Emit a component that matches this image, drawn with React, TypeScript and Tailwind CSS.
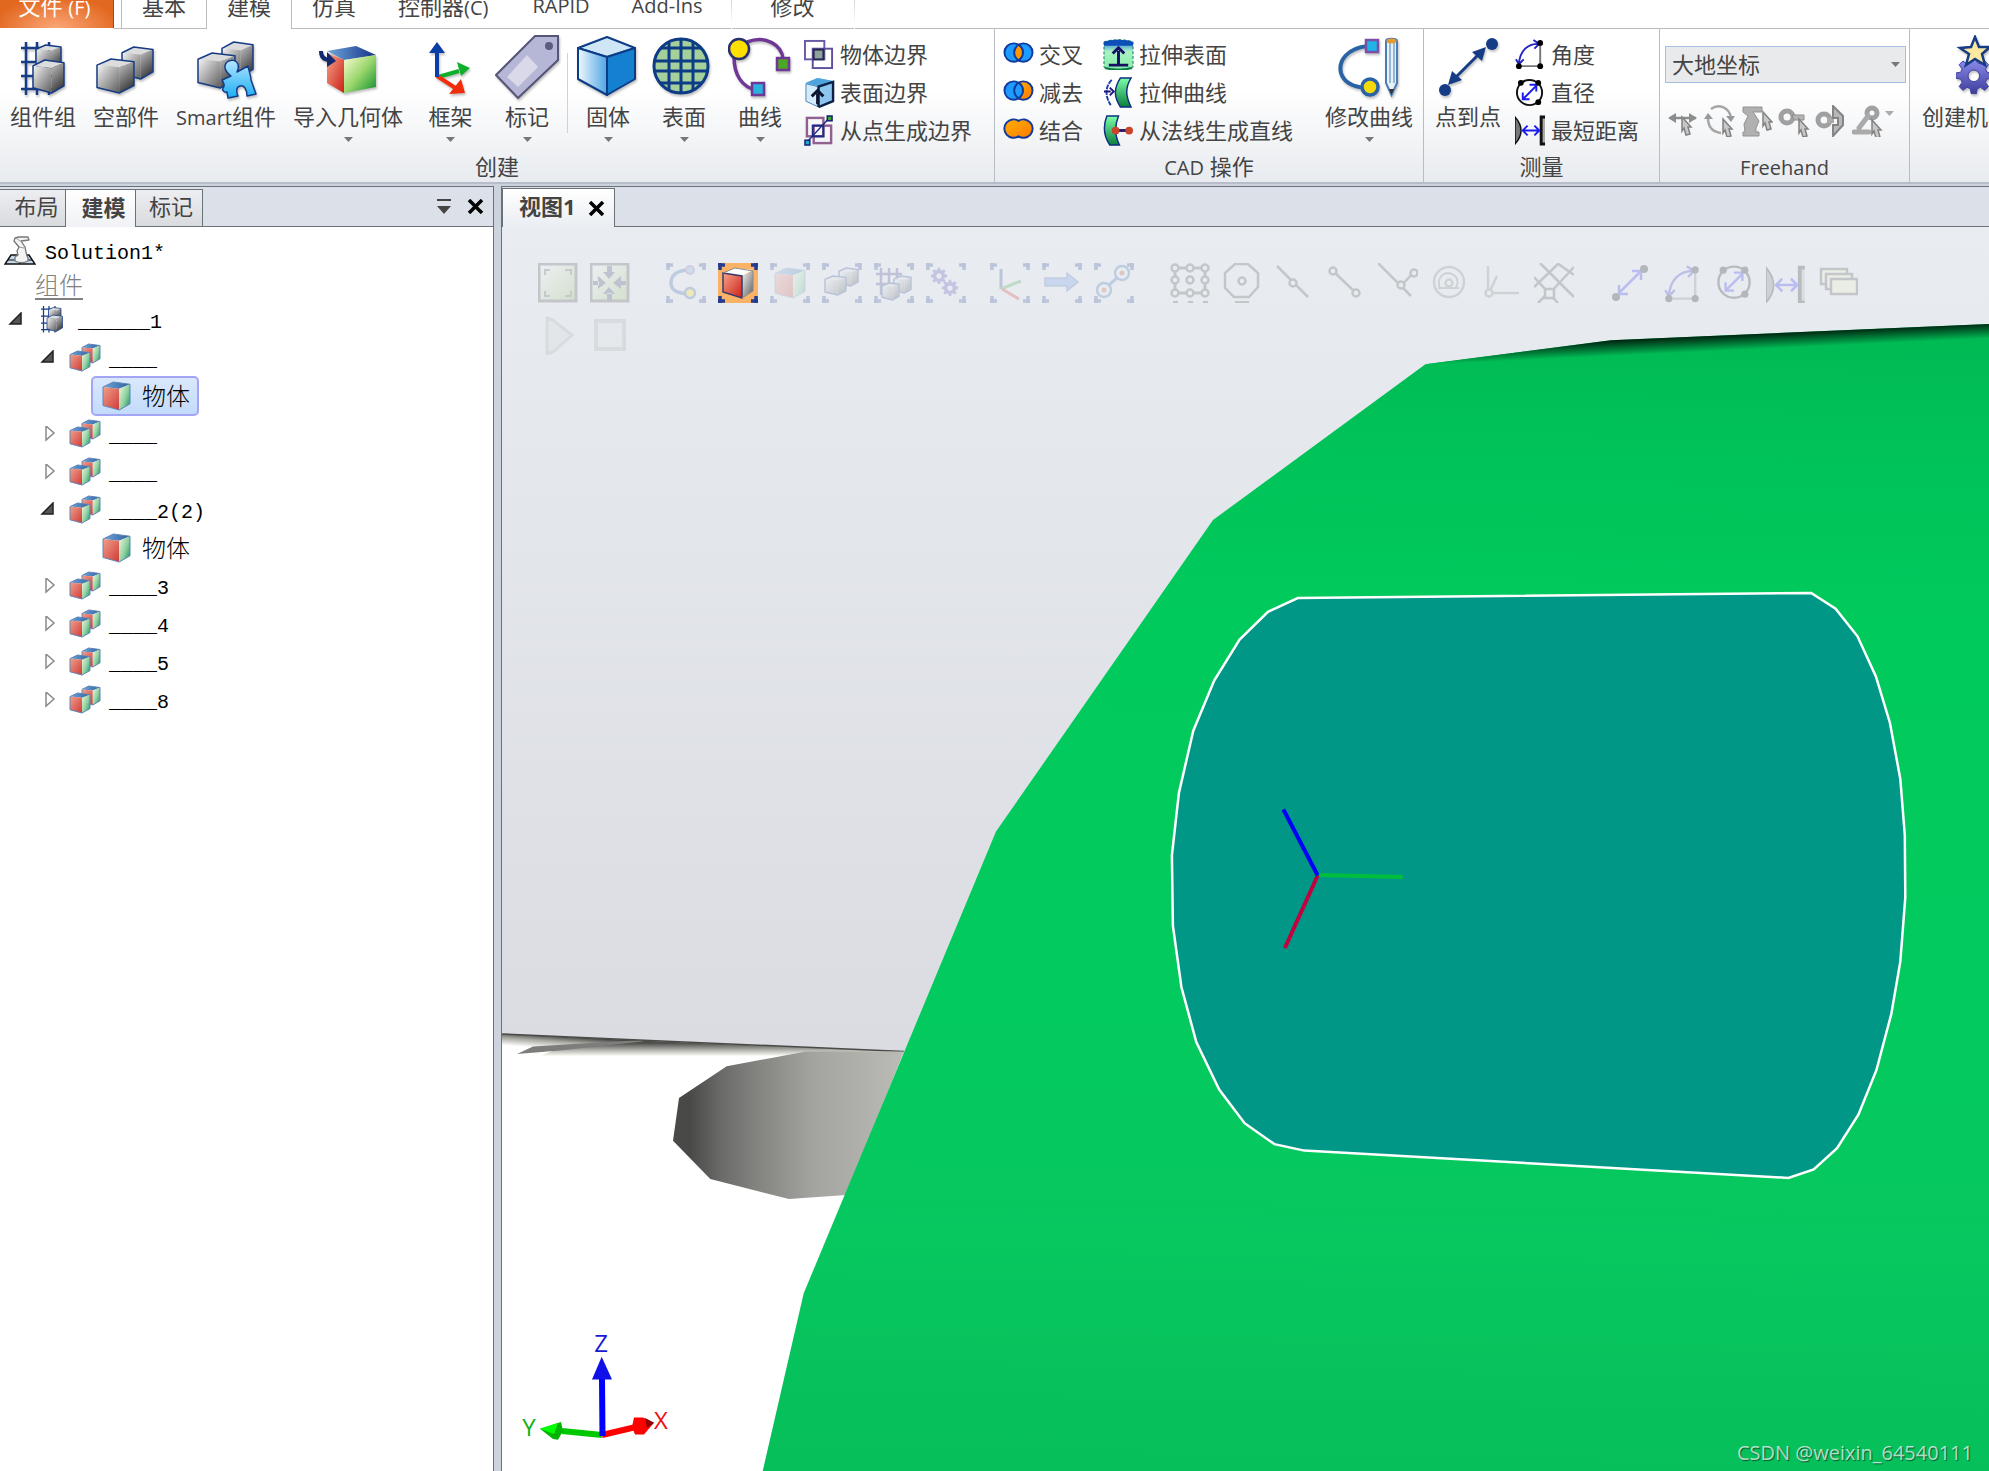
import type { ReactNode } from "react";

const NAVY = "#163c85";

// Shared gradients, referenced by every icon on the page
const IconDefs = () => (
  <svg className="absolute h-0 w-0" aria-hidden="true">
    <defs>
      <linearGradient id="greyFront" x1="0" y1="0" x2="1" y2="1">
        <stop offset="0" stopColor="#f4f4f4" />
        <stop offset="0.5" stopColor="#a9a9a9" />
        <stop offset="1" stopColor="#5d5d5d" />
      </linearGradient>
      <linearGradient id="greySide" x1="0" y1="0" x2="0.4" y2="1">
        <stop offset="0" stopColor="#c4c4c4" />
        <stop offset="1" stopColor="#3d3d3d" />
      </linearGradient>
      <linearGradient id="redFace" x1="0" y1="0" x2="1" y2="1">
        <stop offset="0" stopColor="#f5a48a" />
        <stop offset="1" stopColor="#cc1f16" />
      </linearGradient>
      <linearGradient id="softRed" x1="0" y1="0" x2="1" y2="1">
        <stop offset="0" stopColor="#f0a08a" />
        <stop offset="1" stopColor="#cf3a38" />
      </linearGradient>
      <linearGradient id="greenFace" x1="0" y1="0" x2="1" y2="1">
        <stop offset="0" stopColor="#fbfdd8" />
        <stop offset="0.5" stopColor="#9bd76c" />
        <stop offset="1" stopColor="#0c8d2c" />
      </linearGradient>
      <linearGradient id="softGreen" x1="0" y1="0" x2="1" y2="0.8">
        <stop offset="0" stopColor="#eef7dc" />
        <stop offset="0.6" stopColor="#8ed0a0" />
        <stop offset="1" stopColor="#2a9a68" />
      </linearGradient>
      <linearGradient id="blueTop" x1="0" y1="0" x2="1" y2="0">
        <stop offset="0" stopColor="#6fa8d8" />
        <stop offset="1" stopColor="#14308a" />
      </linearGradient>
      <linearGradient id="softBlue" x1="0" y1="0" x2="1" y2="0">
        <stop offset="0" stopColor="#6fa6dc" />
        <stop offset="1" stopColor="#2f5f9f" />
      </linearGradient>
      <linearGradient id="solidFront" x1="0" y1="0" x2="1" y2="0">
        <stop offset="0" stopColor="#f1f8fd" />
        <stop offset="1" stopColor="#4fa6e4" />
      </linearGradient>
      <linearGradient id="puzzle" x1="0" y1="0" x2="0" y2="1">
        <stop offset="0" stopColor="#b5e6ff" />
        <stop offset="1" stopColor="#1aaef5" />
      </linearGradient>
      <linearGradient id="cyan" x1="0" y1="0" x2="0" y2="1">
        <stop offset="0" stopColor="#1a6fe0" />
        <stop offset="0.4" stopColor="#a9f2c4" />
        <stop offset="1" stopColor="#86efa4" />
      </linearGradient>
      <linearGradient id="band" x1="0" y1="0" x2="0" y2="1">
        <stop offset="0" stopColor="#7dffa8" />
        <stop offset="1" stopColor="#0b7d3c" />
      </linearGradient>
      <linearGradient id="gear" x1="0" y1="0" x2="0" y2="1">
        <stop offset="0" stopColor="#8f8ff0" />
        <stop offset="1" stopColor="#3d3d9c" />
      </linearGradient>
      <linearGradient id="orange" x1="0" y1="0" x2="1" y2="1">
        <stop offset="0" stopColor="#ffb000" />
        <stop offset="1" stopColor="#ff7a00" />
      </linearGradient>
      <linearGradient id="paleGreen" x1="0" y1="0" x2="1" y2="1">
        <stop offset="0" stopColor="#ffffff" />
        <stop offset="1" stopColor="#8fb94f" />
      </linearGradient>
    </defs>
  </svg>
);

type CubeProps = { x: number; y: number; w: number; h: number; color?: boolean };

// Box seen from slightly above, either grey with a navy outline or coloured
const Cube = ({ x, y, w, h, color = false }: CubeProps) => {
  const pts = (list: number[][]) => list.map(([px, py]) => `${x + px * w},${y + py * h}`).join(" ");
  return (
    <g strokeLinejoin="round">
      <polygon points={pts([[0, 0.18], [0.38, 0], [1, 0.08], [0.6, 0.24]])} fill={color ? "url(#softBlue)" : "#dcdcdc"} />
      <polygon points={pts([[0, 0.18], [0.6, 0.24], [0.6, 1], [0, 0.84]])} fill={color ? "url(#softRed)" : "url(#greyFront)"} />
      <polygon points={pts([[0.6, 0.24], [1, 0.08], [1, 0.78], [0.6, 1]])} fill={color ? "url(#softGreen)" : "url(#greySide)"} />
      <polygon
        points={pts([[0, 0.18], [0.38, 0], [1, 0.08], [1, 0.78], [0.6, 1], [0, 0.84]])}
        fill="none"
        stroke={color ? "#5f86b8" : NAVY}
        strokeWidth={color ? 1 : 1.5}
      />
    </g>
  );
};

const GEAR =
  "M10.4 1h3.2l.5 3 2 .8 2.5-1.8 2.3 2.3-1.8 2.5.8 2 3 .5v3.2l-3 .5-.8 2 1.8 2.5-2.3 2.3-2.5-1.8-2 .8-.5 3h-3.2l-.5-3-2-.8-2.5 1.8-2.3-2.3 1.8-2.5-.8-2-3-.5v-3.2l3-.5.8-2-1.8-2.5 2.3-2.3 2.5 1.8 2-.8zM12 8.5a3.5 3.5 0 1 0 0 7 3.5 3.5 0 0 0 0-7z";

const Icon = ({ size, className, children }: { size: number; className: string; children: ReactNode }) => (
  <svg viewBox={`0 0 ${size} ${size}`} className={`shrink-0 ${className}`} aria-hidden="true">
    {children}
  </svg>
);

// Ribbon drawings on a 64 unit grid
const GridCubes = () => (
  <>
    <path d="M15 7v53M26 7v53M38 7v53M10 13h32M10 27h32M10 41h32M10 54h32" stroke={NAVY} strokeWidth="2.5" />
    <Cube x={25} y={10} w={25} h={24} />
    <Cube x={22} y={25} w={31} h={33} />
  </>
);

const TwoCubes = () => (
  <>
    <Cube x={28} y={12} w={31} h={32} />
    <Cube x={3} y={24} w={37} h={34} />
  </>
);

const SmartCubes = () => (
  <>
    <Cube x={28} y={7} w={31} h={35} />
    <Cube x={4} y={18} w={37} h={35} />
    <path
      d="M28 45l9-4c-6-4-8-10-4-14 4-3 9-2 11 2 1 3 0 6-1 8l11-6c1 6 3 9 3 14l5 14-9 2c0-7-3-11-7-10-4 1-4 6-2 10l-10 2-1-6c-3 1-5-2-4-4 2-2 1-5-1-8z"
      fill="url(#puzzle)"
      stroke={NAVY}
      strokeWidth="1.5"
      strokeLinejoin="round"
    />
  </>
);

const ImportCube = () => (
  <>
    <polygon points="11,16 40,11 60,20 28,25" fill="url(#blueTop)" />
    <polygon points="11,18 28,25 28,58 11,48" fill="url(#redFace)" />
    <polygon points="28,25 60,20 60,52 28,58" fill="url(#greenFace)" />
    <path d="M5 16c0 6 3 9 9 9" fill="none" stroke="#12296e" strokeWidth="4" />
    <polygon points="11,17 20,26 11,32" fill="#12296e" />
  </>
);

const Frame = () => (
  <>
    <path d="M19 42L40 36" stroke="#0fae2b" strokeWidth="4" />
    <polygon points="51,33 38,27 42,41" fill="#0fae2b" />
    <path d="M18 41l20 13" stroke="#f22d0c" strokeWidth="4" />
    <polygon points="46,58 30,59 42,44" fill="#f22d0c" />
    <path d="M18 42V16" stroke="#0b3fa8" strokeWidth="4" />
    <polygon points="18,7 10,18 26,18" fill="#0b3fa8" />
  </>
);

const Tag = () => (
  <>
    <polygon points="40,1 63,1 63,25 23,63 1,40" fill="#b6b6d6" stroke="#55557a" strokeWidth="2" />
    <polygon points="32,20 43,32 23,52 12,42" fill="#d9d9ea" />
    <circle cx="54" cy="11" r="4" fill="#5c5c80" />
  </>
);

const Solid = () => (
  <g stroke="#0d3c86" strokeWidth="2" strokeLinejoin="round">
    <polygon points="31,2 59,13 31,22 2,13" fill="#cfe6f7" />
    <polygon points="2,13 31,22 31,60 2,44" fill="url(#solidFront)" />
    <polygon points="31,22 59,13 59,44 31,60" fill="#1580cf" />
  </g>
);

const Surface = () => (
  <>
    <circle cx="29" cy="31" r="27" fill="#a5cf9b" stroke="#0d3c86" strokeWidth="3" />
    <path d="M17 7v48M29 4v54M41 7v48M9 13h40M3 26h52M3 36h52M8 48h42" stroke="#0d3c86" strokeWidth="3" />
  </>
);

const Curve = () => (
  <>
    <path d="M19 7C38 0 54 10 55 24M6 22c0 18 8 30 22 33" fill="none" stroke="#6f3796" strokeWidth="3.5" />
    <circle cx="11" cy="14" r="10" fill="#ffe000" stroke="#26306e" strokeWidth="2.5" />
    <rect x="49" y="23" width="12" height="12" fill="#4ea723" stroke="#6f3796" strokeWidth="2.5" />
    <rect x="24" y="48" width="12" height="12" fill="#2bb3df" stroke="#6f3796" strokeWidth="2.5" />
  </>
);

const EditCurve = () => (
  <>
    <path d="M31 11C10 13 1 26 4 38c3 10 13 14 25 15" fill="none" stroke="#2a63a5" strokeWidth="4" />
    <rect x="29" y="5" width="12" height="12" fill="#1fb3e6" stroke="#7a4fa5" strokeWidth="2.5" />
    <circle cx="33" cy="52" r="8" fill="#f5d90a" stroke="#2a63a5" strokeWidth="3.5" />
    <path d="M49 6c0-3 11-3 11 0v42l-5.5 12-5.5-12z" fill="#e9f1f8" stroke="#4a7fb5" strokeWidth="2" />
    <path d="M53 8v40M57 8v40" stroke="#7ba3cc" strokeWidth="1.5" />
    <ellipse cx="54.5" cy="6" rx="5" ry="2.5" fill="#e79b2c" />
    <polygon points="52,54 57,54 54.5,60" fill="#333" />
  </>
);

const PointToPoint = () => (
  <>
    <path d="M18 44L44 18" stroke={NAVY} strokeWidth="3" />
    <polygon points="50,12 46,26 36,17" fill={NAVY} />
    <polygon points="12,50 16,36 26,45" fill={NAVY} />
    <circle cx="56" cy="9" r="6" fill={NAVY} />
    <circle cx="9" cy="55" r="6" fill={NAVY} />
  </>
);

const Mechanism = () => (
  <>
    <g transform="translate(-2 21) scale(1.65)">
      <path d={GEAR} fill="url(#gear)" fillRule="evenodd" stroke="#3f3f9e" strokeWidth="0.6" />
    </g>
    <polygon
      points="19,2 23,12 34,12 26,19 29,30 19,24 10,30 13,19 4,13 15,12"
      fill="#fbe9a0"
      stroke={NAVY}
      strokeWidth="2.5"
    />
  </>
);

// Small ribbon drawings on a 32 unit grid
const BodyBorder = () => (
  <>
    <rect x="1" y="2" width="20" height="19" fill="none" stroke="#6a5aa6" strokeWidth="2" />
    <rect x="9" y="10" width="20" height="20" fill="none" stroke="#5f4f9c" strokeWidth="2" />
    <rect x="10" y="11" width="10" height="10" fill="#8fa39d" stroke="#252850" strokeWidth="2" />
  </>
);

const SurfaceBorder = () => (
  <>
    <path d="M2 6L14 1l16 3v21l-14 6L2 25z" fill="#8cc6ef" />
    <path d="M2 7l13 3v21L2 25z" fill="#d3ebfb" stroke="#4a86c0" />
    <path d="M2 6L14 1l16 3-14 6z" fill="#4fa4dd" />
    <path d="M15 31V10l15-5v20l-15 6" fill="none" stroke="#0d2147" strokeWidth="2.5" />
    <path d="M14 28V17M8 20l6-6 6 6" fill="none" stroke="#0d1430" strokeWidth="3" />
  </>
);

const PointsBorder = () => (
  <>
    <rect x="3" y="3" width="17" height="19" fill="none" stroke="#90608e" strokeWidth="2.5" />
    <rect x="10" y="11" width="18" height="18" fill="none" stroke="#90608e" strokeWidth="2.5" />
    <rect x="9" y="11" width="11" height="11" fill="none" stroke="#1b2b8a" strokeWidth="2" />
    <path d="M3 28L26 3" stroke="#1b2b8a" strokeWidth="1.5" />
    <rect x="1" y="26" width="5" height="5" fill="#22aacc" stroke="#131e77" strokeWidth="1.5" />
    <rect x="24" y="1" width="5" height="5" fill="#3aa832" stroke="#131e77" strokeWidth="1.5" />
  </>
);

const VENN_OUTLINE = "M16 6a9.500 9.500 0 1 0 0 16a9.500 9.500 0 1 0 0-16z";

const Venn = ({ kind }: { kind: "intersect" | "subtract" | "union" }) => (
  <g stroke="#123a9c" strokeWidth="2">
    {kind === "union" ? (
      <path d={VENN_OUTLINE} fill="url(#orange)" />
    ) : (
      <>
        <circle cx="21" cy="14" r="9.5" fill={kind === "intersect" ? "#1d9bff" : "url(#orange)"} />
        <circle cx="11" cy="14" r="9.5" fill="#1d9bff" />
        <path d="M16 6c6 4 6 12 0 16-6-4-6-12 0-16z" fill={kind === "intersect" ? "#ff9800" : "#1d9bff"} />
      </>
    )}
  </g>
);

const ExtrudeSurface = () => (
  <>
    <path d="M1 3c8-3 22-3 30 0v26c-8 3-22 3-30 0z" fill="url(#cyan)" stroke="#1c6f6a" strokeDasharray="3 2" />
    <path d="M1 3c8-3 22-3 30 0v4H1z" fill="#0c4fb8" />
    <path d="M16 27V12M10 15l6-6 6 6M6 27h20" fill="none" stroke="#150f66" strokeWidth="3" />
    <path d="M2 30c8 2 20 2 28 0" stroke="#0a7c48" strokeWidth="2" fill="none" />
  </>
);

const ExtrudeCurve = () => (
  <>
    <path d="M18 1h11c-6 10-6 18 0 30H18c-7-11-7-19 0-30z" fill="url(#band)" stroke="#0c2f80" strokeWidth="1.5" />
    <path d="M9 3C2 10 2 20 8 29" fill="none" stroke="#1c3fae" strokeWidth="2" strokeDasharray="5 1" />
    <path d="M1 15h7M7 11l4 4-4 4" fill="none" stroke="#221680" strokeWidth="2" />
  </>
);

const NormalLine = () => (
  <>
    <path d="M4 1h12c-4 10-4 20 1 30H7C1 22 0 11 4 1z" fill="url(#band)" stroke="#0c2f80" strokeWidth="1.5" />
    <path d="M12 16h14" stroke="#2a1a66" strokeWidth="3" />
    <circle cx="13" cy="16" r="4" fill="#c8452c" />
    <circle cx="27" cy="16" r="4" fill="#c8452c" />
  </>
);

const Angle = () => (
  <>
    <path d="M4 28h22V4" fill="none" stroke="#777" strokeWidth="2" />
    <path d="M4 26C5 12 13 5 24 5M1 21l3 5 5-5M19 1l6 4-5 5" fill="none" stroke="#2323c4" strokeWidth="2" />
    <circle cx="4" cy="28" r="3" />
    <circle cx="26" cy="28" r="3" />
    <circle cx="26" cy="4" r="3" />
  </>
);

const Diameter = () => (
  <>
    <circle cx="15" cy="16" r="13" fill="none" stroke="#111" strokeWidth="2" />
    <path d="M8 23L22 9M15 8h7v7M8 16v7h7" fill="none" stroke="#1b1bf0" strokeWidth="2" />
    <circle cx="6" cy="6" r="3" />
    <circle cx="24" cy="6" r="3" />
    <circle cx="24" cy="26" r="3" />
  </>
);

const Distance = () => (
  <>
    <path d="M0 2c8 9 8 19 0 28z" fill="#777" stroke="#111" strokeWidth="1.5" />
    <path d="M31 2h-4v28h4" fill="#aaa" stroke="#111" strokeWidth="3" />
    <path d="M9 16h15M13 11l-5 5 5 5M20 11l5 5-5 5" fill="none" stroke="#1b1bf0" strokeWidth="2" />
  </>
);

const Pointer = ({ x = 18, y = 12 }: { x?: number; y?: number }) => (
  <path d={`M${x} ${y}l9 10h-3l2 7-4 1-2-7-2 3z`} fill="#c8c8c8" stroke="#828282" strokeWidth="1.5" />
);

const freehandIcons: { name: string; art: ReactNode }[] = [
  {
    name: "移动",
    art: (
      <>
        <path d="M3 13h26" stroke="#8c8c8c" strokeWidth="2.5" />
        <path d="M1 13l8-5v10zM30 13l-8-5v10z" fill="#8c8c8c" />
        <Pointer x={15} />
      </>
    ),
  },
  {
    name: "旋转",
    art: (
      <>
        <path d="M7 4c7-5 18-3 20 9M4 13c0 9 5 14 13 15" fill="none" stroke="#a5a5a5" strokeWidth="2.5" />
        <path d="M22 11h9l-4 6zM0 14h9l-5-6z" fill="#999" />
        <Pointer x={19} y={14} />
      </>
    ),
  },
  {
    name: "手动关节",
    art: (
      <>
        <path d="M2 2h19v5h-9l6 9-3 7v4h3v4H2v-4h2l-1-8 4-8-5-4z" fill="#b0b0b0" stroke="#939393" />
        <Pointer x={22} y={7} />
      </>
    ),
  },
  {
    name: "手动线性",
    art: (
      <>
        <circle cx="9" cy="12" r="6" fill="none" stroke="#a0a0a0" strokeWidth="5" />
        <path d="M14 10h12v5H16z" fill="#b5b5b5" stroke="#8d8d8d" />
        <Pointer x={21} y={14} />
      </>
    ),
  },
  {
    name: "手动重定位",
    art: (
      <>
        <circle cx="9" cy="15" r="6" fill="none" stroke="#a0a0a0" strokeWidth="5" />
        <path d="M12 13h7v5h-7z" fill="#aaa" />
        <path d="M18 1l10 10v9L18 31V20h5v-7h-5z" fill="#b8b8b8" stroke="#858585" strokeWidth="2" />
      </>
    ),
  },
  {
    name: "多个机器人手动操作",
    art: (
      <>
        <circle cx="20" cy="8" r="5" fill="none" stroke="#a0a0a0" strokeWidth="5" />
        <path d="M16 11L7 23M2 27h15" stroke="#aaa" strokeWidth="5" strokeLinecap="round" />
        <Pointer x={20} y={15} />
      </>
    ),
  },
];

// Corner brackets around the selection-level tools
const Corners = () => (
  <path
    d="M0 2h7M2 0v7M33 2h7M38 0v7M0 38h7M2 40v-7M33 38h7M38 40v-7"
    stroke="#243c8f"
    strokeWidth="3.5"
    fill="none"
  />
);

const node = (cx: number, cy: number) => (
  <circle key={`${cx}-${cy}`} cx={cx} cy={cy} r="3.5" fill="#eee" stroke="#444" strokeWidth="2.5" />
);

type Tool = { name: string; art: ReactNode; active?: boolean; faint?: boolean };

const viewTools: Tool[][] = [
  [
    {
      name: "查看全部",
      art: (
        <>
          <rect x="1" y="1" width="37" height="37" fill="url(#paleGreen)" stroke="#444" strokeWidth="3" />
          <path d="M7 12V7h5M27 7h6v5M7 28v5h5M27 33h6v-5" fill="none" stroke="#555" strokeWidth="2" />
        </>
      ),
    },
    {
      name: "查看中心",
      art: (
        <>
          <rect x="1" y="1" width="37" height="37" fill="url(#paleGreen)" stroke="#444" strokeWidth="3" />
          <path d="M13 9h12l-6 7zM17 3h5v7h-5zM13 31h12l-6-7zM17 30h5v7h-5zM8 13v13l8-6zM3 18h6v4H3zM31 13v13l-8-6zM30 18h6v4h-6z" fill="#27365f" />
        </>
      ),
    },
  ],
  [
    {
      name: "选择曲线",
      art: (
        <>
          <Corners />
          <path d="M24 7C10 7 5 13 5 20s5 10 17 11" fill="none" stroke="#2b58a8" strokeWidth="3.5" />
          <circle cx="24" cy="7" r="4" fill="#7aa7dd" stroke="#8a58aa" strokeWidth="2" />
          <circle cx="24" cy="30" r="5" fill="#ffe000" stroke="#2b58a8" strokeWidth="2.5" />
        </>
      ),
    },
    {
      name: "选择表面",
      active: true,
      art: (
        <>
          <Corners />
          <polygon points="5,10 17,5 35,7 24,13" fill="#fff" />
          <polygon points="24,13 35,8 35,28 24,35" fill="url(#greyFront)" />
          <polygon points="5,10 24,13 24,35 5,29" fill="url(#redFace)" stroke="#3a3a6e" strokeWidth="1.5" />
          <path d="M5 10l12-5 18 3v20l-11 7" fill="none" stroke="#8a8a8a" />
        </>
      ),
    },
    {
      name: "选择物体",
      art: (
        <>
          <Corners />
          <Cube x={5} y={5} w={30} h={30} color />
        </>
      ),
    },
    {
      name: "选择部件",
      art: (
        <>
          <Corners />
          <Cube x={17} y={5} w={19} h={18} />
          <Cube x={3} y={13} w={21} h={19} />
        </>
      ),
    },
    {
      name: "选择组",
      art: (
        <>
          <Corners />
          <path d="M7 5v27M15 5v20M23 5v20M2 11h26M2 21h18" stroke="#3b2f8f" strokeWidth="2.5" />
          <Cube x={20} y={13} w={17} h={17} />
          <Cube x={8} y={20} w={17} h={17} />
        </>
      ),
    },
    {
      name: "选择机械装置",
      art: (
        <>
          <Corners />
          <g fill="#433db0" fillRule="evenodd">
            <path d={GEAR} transform="translate(4 4) scale(0.75)" />
            <path d={GEAR} transform="translate(15 16) scale(0.75)" />
          </g>
        </>
      ),
    },
  ],
  [
    {
      name: "选择目标点",
      art: (
        <>
          <Corners />
          <path d="M11 6v20" stroke="#24408f" strokeWidth="3" />
          <path d="M11 26l20-8" stroke="#2ba33c" strokeWidth="3" />
          <path d="M12 26l17 10" stroke="#d3281b" strokeWidth="3" />
        </>
      ),
    },
    {
      name: "选择移动指令",
      art: (
        <>
          <Corners />
          <path d="M3 15h22v-5l11 9-11 9v-5H3z" fill="#5c92e8" stroke="#3a5fa6" strokeWidth="1.5" />
        </>
      ),
    },
    {
      name: "选择路径",
      art: (
        <>
          <Corners />
          <circle cx="28" cy="10" r="7" fill="none" stroke="#2f62ab" strokeWidth="2.5" />
          <circle cx="10" cy="27" r="7" fill="none" stroke="#2f62ab" strokeWidth="2.5" />
          <path d="M15 22l8-7" stroke="#2f62ab" strokeWidth="3" />
          <circle cx="28" cy="10" r="2.5" fill="#c8452c" />
          <circle cx="10" cy="27" r="2.5" fill="#c8452c" />
        </>
      ),
    },
  ],
  [
    {
      name: "捕捉对象",
      art: (
        <>
          <rect x="5" y="5" width="30" height="25" fill="none" stroke="#444" strokeWidth="3" />
          {[5, 20, 35].flatMap((cx) => [5, 17, 30].map((cy) => node(cx, cy)))}
          <path d="M3 39h5M18 39h5M33 39h5" stroke="#444" strokeWidth="2" />
        </>
      ),
    },
    {
      name: "捕捉中心",
      art: (
        <>
          <polygon points="13,1 26,1 36,10 36,24 27,34 12,34 3,25 3,10" fill="none" stroke="#444" strokeWidth="2.5" />
          {node(20, 18)}
          <path d="M13 39h14" stroke="#444" strokeWidth="2" />
        </>
      ),
    },
    { name: "捕捉中点", art: <><path d="M3 3l31 31" stroke="#444" strokeWidth="2.5" />{node(19, 20)}</> },
    { name: "捕捉末端", art: <><path d="M7 8l24 23" stroke="#444" strokeWidth="2.5" />{node(7, 8)}{node(30, 30)}</> },
    {
      name: "捕捉边缘",
      art: (
        <>
          <path d="M0 0l33 33M23 23L36 9" stroke="#444" strokeWidth="2.5" />
          {node(23, 22)}
          {node(36, 10)}
        </>
      ),
    },
    {
      name: "捕捉重心",
      faint: true,
      art: (
        <>
          <circle cx="19" cy="19" r="15" fill="none" stroke="#444" strokeWidth="2.5" />
          <path d="M10 26c-4-12 4-18 12-15 8 4 6 12 2 15M8 25h21" fill="none" stroke="#444" strokeWidth="2" />
          {node(19, 20)}
        </>
      ),
    },
    {
      name: "捕捉本地原点",
      faint: true,
      art: (
        <>
          <path d="M6 3v27h31M8 28l7-15" fill="none" stroke="#444" strokeWidth="2.5" />
          {node(7, 30)}
        </>
      ),
    },
    {
      name: "捕捉网格",
      art: (
        <>
          <path d="M6 0l34 34M0 24L25 0M0 14l24 26M16 30L40 4M23 0l17 12M4 40l11-11" stroke="#444" strokeWidth="2.5" />
          <rect x="11" y="26" width="9" height="9" fill="#eee" stroke="#444" strokeWidth="2.5" />
        </>
      ),
    },
  ],
  [
    {
      name: "测量点到点",
      art: (
        <>
          <path d="M9 30L31 8M9 22v9h9M22 8h9v9" fill="none" stroke="#1b1bf0" strokeWidth="2.5" />
          <circle cx="34" cy="6" r="4" />
          <circle cx="6" cy="34" r="4" />
        </>
      ),
    },
    { name: "测量角度", art: <g transform="translate(2 2) scale(1.2)"><Angle /></g> },
    { name: "测量直径", art: <g transform="translate(2 0) scale(1.2)"><Diameter /></g> },
    { name: "测量最短距离", art: <g transform="translate(0 2) scale(1.25)"><Distance /></g> },
    {
      name: "跟踪移动对象",
      art: (
        <g fill="#f3f7c0" stroke="#444" strokeWidth="2.5">
          <rect x="3" y="6" width="26" height="15" />
          <rect x="8" y="11" width="26" height="15" />
          <rect x="13" y="16" width="26" height="15" />
        </g>
      ),
    },
  ],
];

const playTools: Tool[] = [
  { name: "播放", faint: true, art: <path d="M9 3l6 2 19 15-19 17-6 2z" fill="#ccc" stroke="#888" strokeWidth="3" /> },
  { name: "停止", faint: true, art: <rect x="6" y="6" width="28" height="28" fill="#ddd" stroke="#888" strokeWidth="4" /> },
];

const groupGaps = ["", "ml-9", "ml-6", "ml-9", "ml-9"];

const ToolButton = ({ tool }: { tool: Tool }) => (
  <button
    type="button"
    aria-label={tool.name}
    className={`h-10 w-10 ${tool.active ? "bg-[#f9b266]" : tool.faint ? "opacity-15" : "opacity-22"}`}
  >
    <Icon size={40} className="h-10 w-10">
      {tool.art}
    </Icon>
  </button>
);

const DownArrow = ({ className = "" }: { className?: string }) => (
  <svg viewBox="0 0 9 5" className={`h-[5px] w-[9px] ${className}`} aria-hidden="true">
    <polygon points="0,0 9,0 4.5,5" fill="#777" />
  </svg>
);

const CloseIcon = () => (
  <svg viewBox="0 0 17 15" className="h-[15px] w-[17px]" aria-hidden="true">
    <path d="M2 1l13 13M15 1L2 14" stroke="#000" strokeWidth="3.5" />
  </svg>
);

type BigButtonProps = { label: ReactNode; icon: ReactNode; width: string; menu?: boolean };

const BigButton = ({ label, icon, width, menu = false }: BigButtonProps) => (
  <button type="button" className={`flex shrink-0 flex-col items-center pt-1.5 ${width}`}>
    <Icon size={64} className="h-16 w-16 drop-shadow-[1px_2px_1px_rgba(0,0,0,0.25)]">
      {icon}
    </Icon>
    <span className="mt-[3px] leading-7 whitespace-nowrap">{label}</span>
    {menu && <DownArrow className="mt-[7px]" />}
  </button>
);

const SmallButton = ({ label, icon }: { label: string; icon: ReactNode }) => (
  <button type="button" className="flex h-[38px] items-center gap-[5px] whitespace-nowrap">
    <Icon size={32} className="h-[31px] w-[31px]">
      {icon}
    </Icon>
    <span className="pb-px leading-7">{label}</span>
  </button>
);

const RibbonGroup = ({ title, width, children }: { title?: ReactNode; width: string; children: ReactNode }) => (
  <section className={`flex shrink-0 flex-col border-r border-[#b9bdc3] ${width}`}>
    <div className="flex h-[122px]">{children}</div>
    {title && <h2 className="text-center leading-8">{title}</h2>}
  </section>
);

const Latin = ({ children }: { children: ReactNode }) => <span className="text-xl">{children}</span>;

const TopTabs = () => {
  const tab = "h-[29px] border-b border-[#bcbcbc] whitespace-nowrap";
  const text = "-mt-[7px] block h-[34px] leading-6";
  return (
    <nav className="flex h-[29px] overflow-hidden bg-white text-[22px] text-[#444]">
      <button
        type="button"
        className="h-7 w-[114px] border-r border-[#a3481a] bg-radial-[at_50%_100%] from-[#fba778] to-[#e2671f] to-80% pr-1 text-white"
      >
        <span className={text}>
          文件 <Latin>(F)</Latin>
        </span>
      </button>
      <div className="w-[7px] border-b border-[#bcbcbc]" />
      <button type="button" className={`${tab} border-x px-5`}>
        <span className={text}>基本</span>
      </button>
      <button type="button" className="h-[29px] px-5">
        <span className={text}>建模</span>
      </button>
      <button type="button" className={`${tab} border-l px-5`}>
        <span className={text}>仿真</span>
      </button>
      <button type="button" className={`${tab} px-[22px]`}>
        <span className={text}>
          控制器<Latin>(C)</Latin>
        </span>
      </button>
      <button type="button" className={`${tab} px-[22px]`}>
        <span className={`${text} text-xl leading-6`}>RAPID</span>
      </button>
      <button type="button" className={`${tab} pr-7 pl-5`}>
        <span className={`${text} text-xl leading-6`}>Add-Ins</span>
      </button>
      <div className="h-6 w-px bg-linear-to-b from-[#d5d5d5] to-white" />
      <button type="button" className={`${tab} w-[122px]`}>
        <span className={text}>修改</span>
      </button>
      <div className="h-6 w-px bg-linear-to-b from-[#d5d5d5] to-white" />
      <div className="flex-1 border-b border-[#bcbcbc]" />
    </nav>
  );
};

const Ribbon = () => (
  <div className="flex h-[155px] overflow-hidden border-b-2 border-[#b7bec9] bg-linear-to-b from-white from-40% to-[#e8ebef] text-[22px] text-[#444]">
    <RibbonGroup title="创建" width="w-[995px]">
      <div className="flex pl-0.5">
        <BigButton label="组件组" width="w-[82px]" icon={<GridCubes />} />
        <BigButton label="空部件" width="w-[84px]" icon={<TwoCubes />} />
        <BigButton label={<><Latin>Smart</Latin>组件</>} width="w-[116px]" icon={<SmartCubes />} />
        <BigButton label="导入几何体" width="w-[128px]" icon={<ImportCube />} menu />
        <BigButton label="框架" width="w-[77px]" icon={<Frame />} menu />
        <BigButton label="标记" width="w-[76px]" icon={<Tag />} menu />
        <div className="mx-0.5 mt-6 h-20 w-px bg-[#cfd2d6]" />
        <BigButton label="固体" width="w-[76px]" icon={<Solid />} menu />
        <BigButton label="表面" width="w-[76px]" icon={<Surface />} menu />
        <BigButton label="曲线" width="w-[76px]" icon={<Curve />} menu />
      </div>
      <div className="flex flex-col pt-1.5 pl-1.5">
        <SmallButton label="物体边界" icon={<BodyBorder />} />
        <SmallButton label="表面边界" icon={<SurfaceBorder />} />
        <SmallButton label="从点生成边界" icon={<PointsBorder />} />
      </div>
    </RibbonGroup>

    <RibbonGroup title={<><Latin>CAD</Latin> 操作</>} width="w-[429px]">
      <div className="flex flex-col pt-1.5 pl-2">
        <SmallButton label="交叉" icon={<Venn kind="intersect" />} />
        <SmallButton label="减去" icon={<Venn kind="subtract" />} />
        <SmallButton label="结合" icon={<Venn kind="union" />} />
      </div>
      <div className="flex flex-col pt-1.5 pl-5">
        <SmallButton label="拉伸表面" icon={<ExtrudeSurface />} />
        <SmallButton label="拉伸曲线" icon={<ExtrudeCurve />} />
        <SmallButton label="从法线生成直线" icon={<NormalLine />} />
      </div>
      <div className="flex flex-1 justify-end pr-0.5">
        <BigButton label="修改曲线" width="w-[104px]" icon={<EditCurve />} menu />
      </div>
    </RibbonGroup>

    <RibbonGroup title="测量" width="w-[236px]">
      <div className="flex pl-1">
        <BigButton label="点到点" width="w-20" icon={<PointToPoint />} />
      </div>
      <div className="flex flex-col pt-1.5 pl-[7px]">
        <SmallButton label="角度" icon={<Angle />} />
        <SmallButton label="直径" icon={<Diameter />} />
        <SmallButton label="最短距离" icon={<Distance />} />
      </div>
    </RibbonGroup>

    <RibbonGroup title={<Latin>Freehand</Latin>} width="w-[250px]">
      <div className="flex flex-1 flex-col pt-[17px] pr-[3px] pl-[5px]">
        <div className="relative">
          <select
            aria-label="参考坐标系"
            className="h-[37px] w-full appearance-none border border-[#a5bfe2] bg-[#e9eaec] px-1.5 pb-px text-[22px] text-[#444]"
          >
            <option>大地坐标</option>
          </select>
          <DownArrow className="pointer-events-none absolute top-4 right-1.5" />
        </div>
        <div className="mt-[22px] flex items-start gap-[5px] pl-0.5">
          {freehandIcons.map((item) => (
            <button type="button" key={item.name} aria-label={item.name}>
              <Icon size={32} className="h-8 w-8">
                {item.art}
              </Icon>
            </button>
          ))}
          <DownArrow className="-ml-1 mt-1.5 opacity-60" />
        </div>
      </div>
    </RibbonGroup>

    <div className="flex pl-3">
      <BigButton label="创建机械装置" width="w-[132px]" icon={<Mechanism />} />
    </div>
  </div>
);

type TreeNode = { label: string; kind: "part" | "body"; open?: boolean; selected?: boolean };

const treeNodes: TreeNode[] = [
  { label: "____", kind: "part", open: true },
  { label: "物体", kind: "body", selected: true },
  { label: "____", kind: "part" },
  { label: "____", kind: "part" },
  { label: "____2(2)", kind: "part", open: true },
  { label: "物体", kind: "body" },
  { label: "____3", kind: "part" },
  { label: "____4", kind: "part" },
  { label: "____5", kind: "part" },
  { label: "____8", kind: "part" },
];

const Expander = ({ open }: { open?: boolean }) => (
  <svg viewBox="0 0 16 16" className="h-4 w-4" aria-hidden="true">
    {open ? (
      <polygon points="2,12 13,1 13,12" fill="#555" stroke="#222" strokeWidth="1.5" />
    ) : (
      <polygon points="6,0 14,7 6,14" fill="#fff" stroke="#8a8a8a" strokeWidth="1.5" />
    )}
  </svg>
);

const monoText = "pt-1.5 font-['Liberation_Mono','Noto_Sans_CJK_SC',monospace] text-xl leading-8";

const TreeRow = ({ item }: { item: TreeNode }) =>
  item.kind === "part" ? (
    <li className="flex h-[38px] items-center pl-10">
      <button type="button" aria-label="展开">
        <Expander open={item.open} />
      </button>
      <Icon size={32} className="ml-[13px] h-8 w-8">
        <Cube x={13} y={2} w={18} h={19} color />
        <Cube x={1} y={9} w={20} h={20} color />
      </Icon>
      <span className={`${monoText} ml-2`}>{item.label}</span>
    </li>
  ) : (
    <li className="flex h-[38px] items-center pl-[91px]">
      <button
        type="button"
        className={`flex h-10 items-center gap-2.5 rounded-[5px] border-2 pr-[7px] pl-[9px] text-2xl font-light ${
          item.selected ? "border-[#a5a5f8] bg-linear-to-b from-[#dae8fb] to-[#c2dbfb]" : "border-transparent"
        }`}
      >
        <Icon size={30} className="h-[30px] w-[30px]">
          <Cube x={1} y={1} w={27} h={28} color />
        </Icon>
        <span>{item.label}</span>
      </button>
    </li>
  );

const BrowserPanel = () => (
  <aside className="flex w-[494px] shrink-0 flex-col border-t border-r border-[#6b7179] bg-white">
    <header className="flex h-10 items-end border-b border-[#6b7179] bg-[#dce0e8] text-[22px] text-[#444]">
      <button type="button" className="h-[37px] w-[66px] border-t border-r border-[#6b7179] bg-linear-to-b from-[#eceef1] to-[#d9dbdf] pb-1 pl-2 leading-8">
        布局
      </button>
      <button type="button" className="-mb-px h-[38px] w-[69px] border-t border-[#6b7179] bg-linear-to-b from-white to-[#f0f2f5] pb-1 pl-1.5 leading-8 font-bold">
        建模
      </button>
      <button type="button" className="h-[37px] w-[68px] border-x border-t border-[#6b7179] bg-linear-to-b from-[#eceef1] to-[#d9dbdf] pb-1 pl-1 leading-8">
        标记
      </button>
      <div className="flex h-full flex-1 items-center justify-end gap-4 pr-[9px]">
        <button type="button" aria-label="窗口位置">
          <svg viewBox="0 0 14 16" className="h-4 w-3.5" aria-hidden="true">
            <path d="M0 1h14" stroke="#444" strokeWidth="2" />
            <polygon points="0,7 14,7 7,15" fill="#444" />
          </svg>
        </button>
        <button type="button" aria-label="关闭">
          <CloseIcon />
        </button>
      </div>
    </header>

    <div className="pt-1.5 text-black">
      <div className="flex h-9 items-center pl-1">
        {/* Robot standing on a tiled floor */}
        <Icon size={32} className="h-8 w-8">
          <path d="M7 20h18l6 9H1z" fill="#c5d8ee" stroke="#111" strokeWidth="1.5" />
          <path d="M16 20v9M4 25h24" stroke="#111" />
          <path d="M11 26v-4l3-2-1-4 2-4-5-6 1-3 4-1h9l1 3-8 1 4 6 1 5 1 4 1 2v3c-4 2-9 2-13 0z" fill="#f3f3f3" stroke="#777" strokeWidth="1.3" strokeLinejoin="round" />
          <path d="M15 12l5 1M12 3l4 3" stroke="#999" />
        </Icon>
        <span className={`${monoText} ml-[9px]`}>Solution1*</span>
      </div>
      <a href="#components" className="ml-[35px] flex h-8 w-12 items-center text-2xl font-light text-[#808080] underline underline-offset-4">
        组件
      </a>
      <ul>
        <li className="flex h-[38px] items-center pl-2">
          <button type="button" aria-label="折叠">
            <Expander open />
          </button>
          <Icon size={64} className="ml-3 h-8 w-8">
            <g transform="translate(0 -3)">
              <GridCubes />
            </g>
          </Icon>
          <span className={`${monoText} ml-2.5`}>______1</span>
        </li>
        {treeNodes.map((item, index) => (
          <TreeRow key={index} item={item} />
        ))}
      </ul>
    </div>
  </aside>
);

// Shaded model, drawn in window coordinates
const Scene = () => (
  <svg viewBox="502 227 1487 1244" preserveAspectRatio="xMinYMin slice" className="absolute inset-0 h-full w-full">
    <defs>
      <linearGradient id="sky" gradientUnits="userSpaceOnUse" x1="0" y1="227" x2="0" y2="1050">
        <stop offset="0" stopColor="#e9edf2" />
        <stop offset="0.3" stopColor="#e4e7eb" />
        <stop offset="1" stopColor="#dadce1" />
      </linearGradient>
      <linearGradient id="floorLeft" gradientUnits="userSpaceOnUse" x1="570" y1="1036" x2="569" y2="1050">
        <stop offset="0" stopColor="#3a3a38" />
        <stop offset="0.45" stopColor="#a8a8a2" />
        <stop offset="1" stopColor="#fff" />
      </linearGradient>
      <linearGradient id="floorRight" gradientUnits="userSpaceOnUse" x1="700" y1="1043" x2="700" y2="1056">
        <stop offset="0" stopColor="#4d4d4a" />
        <stop offset="0.6" stopColor="#bdbdb8" />
        <stop offset="1" stopColor="#fdfdf8" />
      </linearGradient>
      <linearGradient id="cylinder" gradientUnits="userSpaceOnUse" x1="675" y1="0" x2="905" y2="0">
        <stop offset="0" stopColor="#4a4a48" />
        <stop offset="0.06" stopColor="#484846" />
        <stop offset="0.2" stopColor="#6a6a69" />
        <stop offset="0.35" stopColor="#82827f" />
        <stop offset="0.6" stopColor="#a3a49f" />
        <stop offset="1" stopColor="#bbbcb6" />
      </linearGradient>
      <linearGradient id="green" gradientUnits="userSpaceOnUse" x1="1400" y1="330" x2="1380" y2="1471">
        <stop offset="0" stopColor="#00ba54" />
        <stop offset="0.12" stopColor="#00c459" />
        <stop offset="0.25" stopColor="#01ca5c" />
        <stop offset="0.6" stopColor="#03ca5e" />
        <stop offset="0.8" stopColor="#07c75f" />
        <stop offset="1" stopColor="#06bf5a" />
      </linearGradient>
      <linearGradient id="rim" gradientUnits="userSpaceOnUse" x1="1800" y1="332" x2="1800.7" y2="347">
        <stop offset="0" stopColor="#002612" />
        <stop offset="1" stopColor="#00ba54" />
      </linearGradient>
    </defs>

    <rect x="502" y="227" width="1487" height="1244" fill="#fff" />
    <polygon points="502,227 1989,227 1989,1052 904,1052 502,1034" fill="url(#sky)" />
    <polygon points="502,1034 643,1040.5 600,1050 502,1050" fill="url(#floorLeft)" />
    <polygon points="640,1040.5 904,1051.5 900,1056 540,1056 560,1048" fill="url(#floorRight)" />
    <polygon points="517,1054 533,1046.5 640,1040 643,1041.5 560,1050.5" fill="#7d7d7b" />
    <path d="M502 1034L904 1051.5" stroke="#4a4a48" strokeWidth="1.5" />
    <polygon points="904,1051.5 806,1051.5 726.7,1066.3 679,1098 673,1140.7 710.3,1179 789,1199 846,1195" fill="url(#cylinder)" />

    <polygon points="1425.4,364.3 1611,340.3 1989,324 1989,1471 762.7,1471 803.7,1293.3 996,831.5 1213,520" fill="url(#green)" />
    <polygon points="1425.4,364.3 1611,340.3 1989,324 1989,338.5" fill="url(#rim)" />

    <polygon
      points="1297.8,598.1 1811.2,592.9 1835.6,608.6 1857.5,636.3 1875.9,676.5 1889.9,722.7 1900.3,778.9 1904.8,835.2 1905.3,897.4 1900.3,961.7 1891.3,1014 1876.4,1070.2 1858.5,1114.4 1837.1,1148.1 1813.7,1169.4 1788.4,1177.9 1304.3,1150.6 1274.4,1144.1 1244.6,1123.2 1219.2,1089.5 1196.3,1042.1 1181.4,987 1172.9,925.6 1171.9,855.3 1178.9,793 1193.3,730.7 1214.2,680.5 1239.6,639.5 1268,611.8"
      fill="#009786"
      stroke="#fff"
      strokeWidth="2.5"
    />
    <g strokeWidth="4">
      <path d="M1317.7 875L1402.8 877" stroke="#00bf3c" />
      <path d="M1317.7 875.5L1284.9 948" stroke="#c1003e" />
      <path d="M1317.7 875.5L1283.4 809.5" stroke="#0000fb" />
    </g>

    {/* World axes */}
    <path d="M602 1435L562 1431" stroke="#00c800" strokeWidth="6" />
    <polygon points="540,1428.7 561,1422 563,1431 558,1439.7 553,1439" fill="#00b400" />
    <polygon points="540,1428.7 558,1423 554,1434" fill="#00ff00" />
    <path d="M602 1435L636 1427" stroke="#f00" strokeWidth="6" />
    <polygon points="634,1417.5 643,1417.5 654,1422.7 644,1434.5 635,1434.5 632,1427" fill="#f00" />
    <polygon points="645,1418 654,1422.7 647,1428" fill="#8c0000" />
    <path d="M602.5 1436L602 1378" stroke="#00f" strokeWidth="6" />
    <polygon points="601.7,1356.7 592,1379.5 612,1379.5" fill="#1010e8" />
    <g fontFamily="'Open Sans', 'Noto Sans', sans-serif" fontSize="24" textAnchor="middle">
      <text x="601" y="1352" fill="#1a1ad6">Z</text>
      <text x="529" y="1436" fill="#12b012">Y</text>
      <text x="661" y="1429" fill="#ee1111">X</text>
    </g>
  </svg>
);

const ViewPanel = () => (
  <main className="flex min-w-0 flex-1 flex-col border-t border-l border-[#6b7179]">
    <header className="flex h-10 items-end border-b border-[#6b7179] bg-[#dce0e8]">
      <div className="-mb-px flex h-[39px] items-center border-x border-t border-[#6b7179] bg-linear-to-b from-white to-[#eaedf2] pr-[9px] pb-1 pl-4 text-[22px] text-[#444]">
        <button type="button" className="leading-8 font-bold">
          视图1
        </button>
        <button type="button" aria-label="关闭视图" className="ml-3 pt-1">
          <CloseIcon />
        </button>
      </div>
    </header>
    <div className="relative flex-1">
      <Scene />
      <div className="relative flex flex-col gap-3 pt-9 pl-9" role="toolbar" aria-label="视图工具">
        <div className="flex">
          {viewTools.map((group, index) => (
            <div key={index} className={`flex gap-3 ${groupGaps[index]}`}>
              {group.map((tool) => (
                <ToolButton key={tool.name} tool={tool} />
              ))}
            </div>
          ))}
        </div>
        <div className="flex gap-3">
          {playTools.map((tool) => (
            <ToolButton key={tool.name} tool={tool} />
          ))}
        </div>
      </div>
      <p className="absolute right-4 bottom-1 text-xl leading-7 text-white/70 [text-shadow:1px_1px_1px_rgba(0,0,0,0.5)]">
        CSDN @weixin_64540111
      </p>
    </div>
  </main>
);

const App = () => (
  <div className="flex min-h-screen flex-col overflow-hidden bg-[#cdd3dd] font-['Open_Sans','Noto_Sans_CJK_SC',sans-serif]">
    <IconDefs />
    <TopTabs />
    <Ribbon />
    <div className="flex flex-1 gap-[7px] pt-0.5">
      <BrowserPanel />
      <ViewPanel />
    </div>
  </div>
);

export default App;
